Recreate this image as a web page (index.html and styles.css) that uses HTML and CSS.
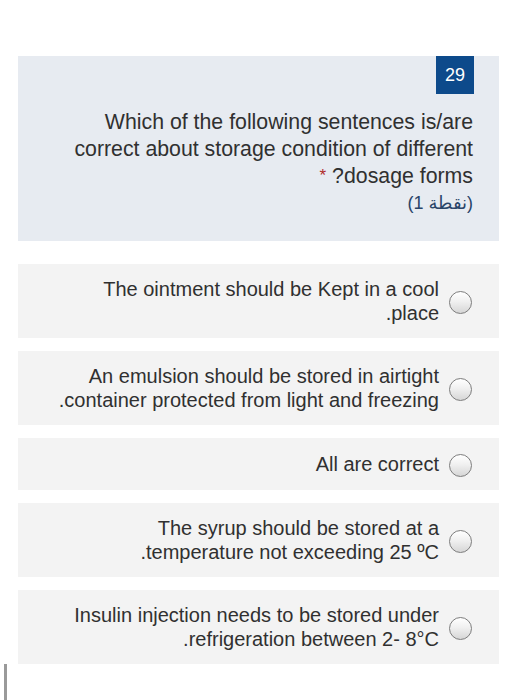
FILE: index.html
```html
<!DOCTYPE html>
<html lang="en">
<head>
<meta charset="utf-8">
<link rel="stylesheet" href="styles.css">
<title>Question 29</title>
</head>
<body>
<main class="page" dir="rtl">
  <section class="question">
    <div class="badge">29</div>
    <p class="q-text">Which of the following sentences is/are<br>correct about storage condition of different<br>dosage forms? <span class="req">*</span></p>
    <p class="points"><bdi dir="ltr">(1 نقطة)</bdi></p>
  </section>
  <ul class="options">
    <li class="option"><span class="radio"></span><span class="label">The ointment should be Kept in a cool<br>place.</span></li>
    <li class="option"><span class="radio"></span><span class="label">An emulsion should be stored in airtight<br>container protected from light and freezing.</span></li>
    <li class="option"><span class="radio"></span><span class="label">All are correct</span></li>
    <li class="option"><span class="radio"></span><span class="label">The syrup should be stored at a<br>temperature not exceeding 25 ºC.</span></li>
    <li class="option"><span class="radio"></span><span class="label">Insulin injection needs to be stored under<br>refrigeration between 2- 8°C.</span></li>
  </ul>
  <div class="cursor-bar"></div>
</main>
</body>
</html>
```
FILE: styles.css
```css
html, body {
  margin: 0;
  padding: 0;
  background: #ffffff;
}

body {
  font-family: "Liberation Sans", Arial, "DejaVu Sans", sans-serif;
  color: #303030;
}

.page {
  position: relative;
  height: 700px;
  box-sizing: border-box;
  padding: 56px 19px 0 18px;
  overflow: hidden;
}

.question {
  background: #e7ebf1;
  padding: 0 26px 24px 26px;
}

.badge {
  width: 38px;
  height: 38px;
  margin-right: -1px;
  background: #0d4a8b;
  color: #ffffff;
  font-size: 18px;
  line-height: 38px;
  text-align: center;
}

.q-text {
  margin: 15px 0 0 0;
  font-size: 21.3px;
  line-height: 27px;
  text-align: right;
}

.req {
  color: #b02a2a;
  font-size: 17px;
  vertical-align: 2px;
  line-height: 1;
}

.points {
  margin: 0;
  font-size: 18px;
  line-height: 27px;
  color: #2a4569;
  text-align: right;
}

.options {
  list-style: none;
  margin: 23px 0 0 0;
  padding: 0;
  display: flex;
  flex-direction: column;
  gap: 13px;
}

.option {
  display: flex;
  align-items: center;
  gap: 10px;
  background: #f3f3f3;
  padding: 13px 27px 13px 12px;
}

.radio {
  flex: 0 0 auto;
  width: 21px;
  height: 21px;
  border: 1.5px solid #7d7d7d;
  border-radius: 50%;
  background: linear-gradient(to bottom, #ffffff 0%, #f0f0f0 45%, #d6d6d6 100%);
  margin-top: 3px;
}

.label {
  font-size: 20px;
  line-height: 24px;
  text-align: right;
}

.cursor-bar {
  position: absolute;
  left: 4px;
  top: 664px;
  width: 3px;
  height: 36px;
  background: #9a9a9a;
}
```
